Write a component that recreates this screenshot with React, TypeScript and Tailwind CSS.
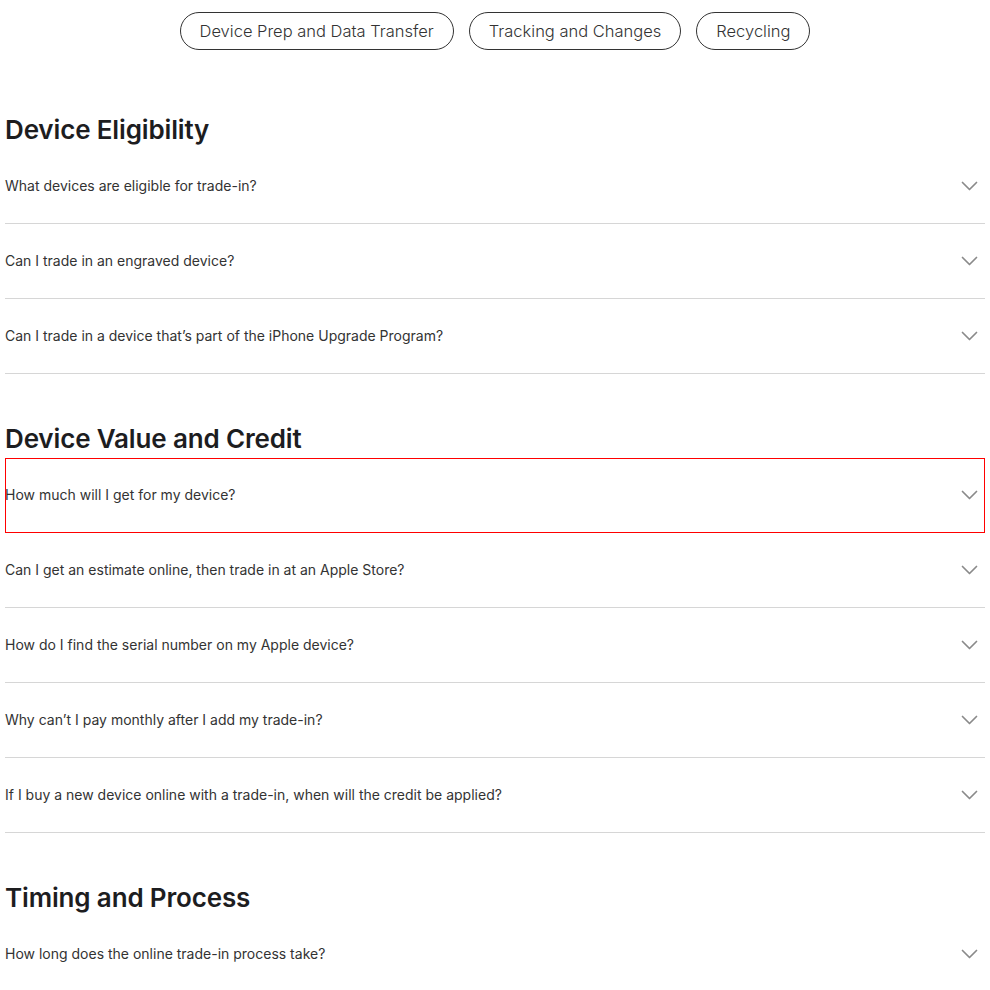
import React from 'react';

interface Section {
  title: string;
  questions: string[];
}

const sections: Section[] = [
  {
    title: 'Device Eligibility',
    questions: [
      'What devices are eligible for trade-in?',
      'Can I trade in an engraved device?',
      'Can I trade in a device that’s part of the iPhone Upgrade Program?',
    ],
  },
  {
    title: 'Device Value and Credit',
    questions: [
      'How much will I get for my device?',
      'Can I get an estimate online, then trade in at an Apple Store?',
      'How do I find the serial number on my Apple device?',
      'Why can’t I pay monthly after I add my trade-in?',
      'If I buy a new device online with a trade-in, when will the credit be applied?',
    ],
  },
  {
    title: 'Timing and Process',
    questions: ['How long does the online trade-in process take?'],
  },
];

const pills = ['Device Prep and Data Transfer', 'Tracking and Changes', 'Recycling'];

const Chevron = () => (
  <svg width="17" height="10" viewBox="0 0 17 10" fill="none" className="shrink-0">
    <path d="M1.5 1.5l7 7 7-7" stroke="#8a8a8a" strokeWidth={1.7} strokeLinecap="round" strokeLinejoin="round" />
  </svg>
);

export default function App() {
  return (
    <div className="w-[990px] min-h-[990px] bg-white font-['Inter','Liberation_Sans',sans-serif] text-[#1d1d1f]">
      {/* pill nav */}
      <div className="flex justify-center gap-[15px] pt-3">
        {pills.map((p) => (
          <button
            key={p}
            className="h-[38px] px-[19px] rounded-full border border-[#333] text-[16.5px] font-light text-[#333] leading-none"
          >
            {p}
          </button>
        ))}
      </div>

      <div className="px-[5px] pt-[64px]">
        {sections.map((s, si) => (
          <section key={s.title} className={si > 0 ? 'mt-[49px]' : ''}>
            <h2 className="text-[26px] leading-[32px] font-semibold tracking-[-0.15px] mb-[3px]">{s.title}</h2>
            <ul>
              {s.questions.map((q, qi) => (
                <li
                  key={q}
                  className={`h-[75px] flex items-center justify-between border-b border-[#d6d6d6] pr-[7px] ${
                    si === 1 && qi === 0 ? 'outline outline-1 outline-[#ff0000] -outline-offset-1' : ''
                  }`}
                >
                  <span className="text-[14px] text-[#333] -translate-y-[1px]">{q}</span>
                  <Chevron />
                </li>
              ))}
            </ul>
          </section>
        ))}
      </div>
    </div>
  );
}
